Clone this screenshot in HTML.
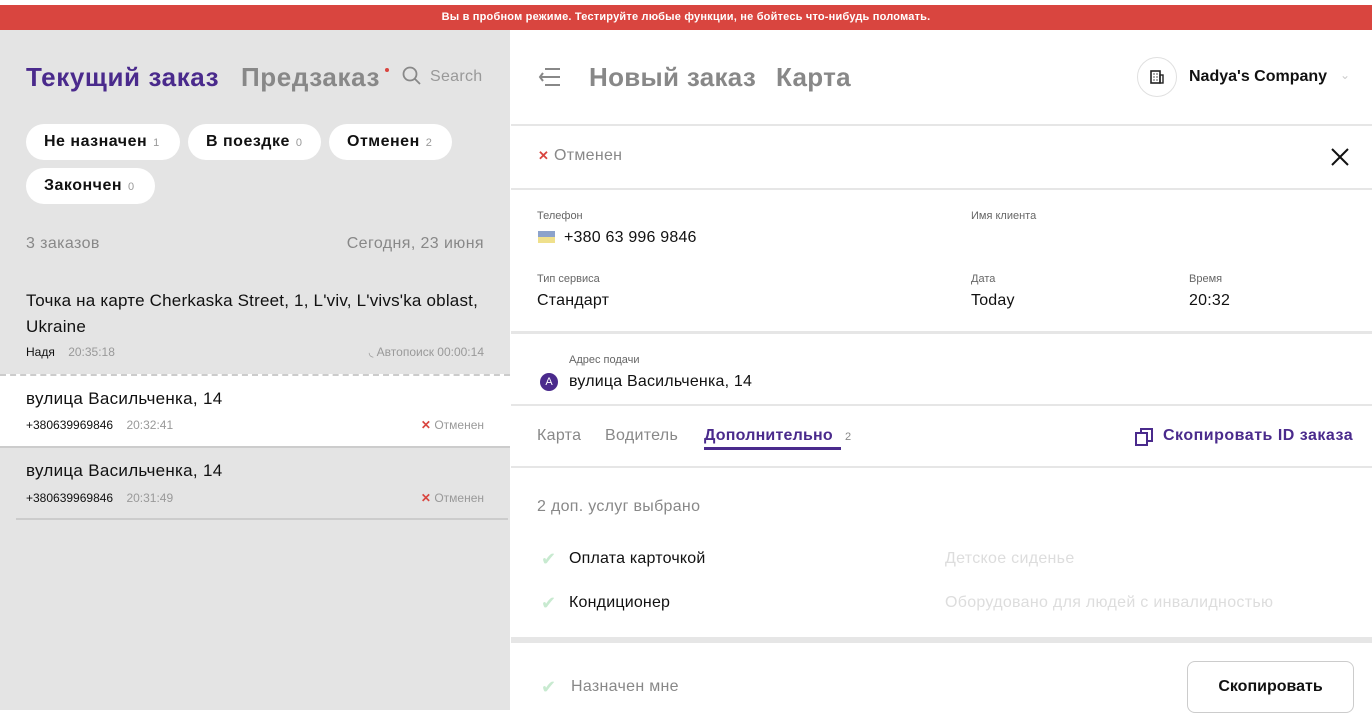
<!DOCTYPE html>
<html><head><meta charset="utf-8">
<style>
*{box-sizing:border-box;margin:0;padding:0}
body{width:1372px;height:710px;overflow:hidden;font-family:"Liberation Sans","Noto Sans CJK SC",sans-serif;background:#fff;position:relative;color:#111}
.a{position:absolute;white-space:nowrap}
.bar{position:absolute;left:0;top:5px;width:1372px;height:25px;background:#d9453f;color:#fff;font-size:11px;font-weight:bold;text-align:center;line-height:25px;letter-spacing:.2px}
.left{position:absolute;left:0;top:30px;width:510px;height:680px;background:#e4e4e4}
.pill{position:absolute;height:36px;background:#fff;border-radius:18px;font-size:16px;font-weight:bold;line-height:36px;padding-left:18px;letter-spacing:.5px}
.pill small{font-size:11px;color:#999;font-weight:normal;margin-left:6px}
.right{position:absolute;left:511px;top:30px;width:861px;height:680px;background:#fff}
.hl{position:absolute;left:511px;width:861px;height:2px;background:#e6e6e6}
.lbl{font-size:11px;color:#666}
.val{font-size:16px;color:#111;letter-spacing:.2px}
</style></head><body>
<div class="bar">Вы в пробном режиме. Тестируйте любые функции, не бойтесь что-нибудь поломать.</div>
<div class="left">
<div class="a" style="left:26px;top:32px;font-size:26px;font-weight:bold;color:#4a2a8c;letter-spacing:.6px">Текущий заказ</div>
<div class="a" style="left:241px;top:32px;font-size:26px;font-weight:bold;color:#888;letter-spacing:.6px">Предзаказ</div>
<div class="a" style="left:385px;top:38px;width:4px;height:4px;border-radius:2px;background:#d9453f"></div>
<svg class="a" style="left:402px;top:36px" width="20" height="20" viewBox="0 0 20 20"><circle cx="8" cy="8" r="6.5" fill="none" stroke="#888" stroke-width="1.8"/><path d="M13 13l5 5" stroke="#888" stroke-width="1.8"/></svg>
<div class="a" style="left:430px;top:38px;font-size:16px;color:#999;letter-spacing:.3px">Search</div>
<div class="pill" style="left:26px;top:94px;width:154px">Не назначен<small>1</small></div>
<div class="pill" style="left:188px;top:94px;width:133px">В поездке<small>0</small></div>
<div class="pill" style="left:329px;top:94px;width:123px">Отменен<small>2</small></div>
<div class="pill" style="left:26px;top:138px;width:129px">Закончен<small>0</small></div>
<div class="a" style="left:26px;top:205px;font-size:16px;color:#888;letter-spacing:.4px">3 заказов</div>
<div class="a" style="right:26px;top:205px;font-size:16px;color:#888;letter-spacing:.4px">Сегодня, 23 июня</div>
<div class="a" style="left:26px;top:258px;font-size:17px;line-height:26px;white-space:normal;width:480px;letter-spacing:.2px">Точка на карте Cherkaska Street, 1, L'viv, L'vivs'ka oblast, Ukraine</div>
<div class="a" style="left:26px;top:315px;font-size:12px">Надя <span style="color:#999;margin-left:10px">20:35:18</span></div>
<div class="a" style="right:26px;top:315px;font-size:12px;color:#999">◟ Автопоиск 00:00:14</div>
<div class="a" style="left:0;top:344px;width:510px;height:72px;background:#fff;border-top:2px dashed #ccc"></div>
<div class="a" style="left:26px;top:359px;font-size:17px;letter-spacing:.3px">вулица Васильченка, 14</div>
<div class="a" style="left:26px;top:388px;font-size:12px">+380639969846 <span style="color:#999;margin-left:10px">20:32:41</span></div>
<div class="a" style="right:26px;top:388px;font-size:12px;color:#999"><span style="color:#d9453f;font-weight:bold">✕</span> Отменен</div>
<div class="a" style="left:0;top:416px;width:510px;height:2px;background:#ccc"></div>
<div class="a" style="left:26px;top:431px;font-size:17px;letter-spacing:.3px">вулица Васильченка, 14</div>
<div class="a" style="left:26px;top:461px;font-size:12px">+380639969846 <span style="color:#999;margin-left:10px">20:31:49</span></div>
<div class="a" style="right:26px;top:461px;font-size:12px;color:#999"><span style="color:#d9453f;font-weight:bold">✕</span> Отменен</div>
<div class="a" style="left:16px;top:488px;width:492px;height:2px;background:#ccc"></div>
</div>
<div class="right"></div>
<svg class="a" style="left:538px;top:67px" width="24" height="20" viewBox="0 0 24 20"><path d="M7 2h15M2 10h20M7 18h15M5 6l-3 4 3 4" fill="none" stroke="#888" stroke-width="2"/></svg>
<div class="a" style="left:589px;top:62px;font-size:26px;font-weight:bold;color:#888;letter-spacing:.3px">Новый заказ</div>
<div class="a" style="left:776px;top:62px;font-size:26px;font-weight:bold;color:#888;letter-spacing:.3px">Карта</div>
<div class="a" style="left:1137px;top:57px;width:40px;height:40px;border:1px solid #e0e0e0;border-radius:20px"></div>
<svg class="a" style="left:1149px;top:69px" width="16" height="16" viewBox="0 0 16 16"><rect x="2" y="2" width="9" height="12" fill="none" stroke="#222" stroke-width="1.6"/><rect x="11" y="6" width="3" height="8" fill="none" stroke="#222" stroke-width="1.4"/><path d="M4.5 5h1M7.5 5h1M4.5 8h1M7.5 8h1M4.5 11h1M7.5 11h1" stroke="#222" stroke-width="1.4"/></svg>
<div class="a" style="left:1189px;top:68px;font-size:16px;font-weight:bold">Nadya's Company</div>
<div class="a" style="left:1340px;top:68px;font-size:12px;color:#ccc">⌄</div>
<div class="hl" style="top:124px"></div>
<div class="a" style="left:538px;top:147px;font-size:16px;color:#888;letter-spacing:.3px"><span style="color:#d9453f;font-size:13px;font-weight:bold">✕</span> Отменен</div>
<svg class="a" style="left:1330px;top:147px" width="20" height="20" viewBox="0 0 20 20"><path d="M2 2l16 16M18 2L2 18" stroke="#111" stroke-width="2"/></svg>
<div class="hl" style="top:188px"></div>
<div class="a lbl" style="left:537px;top:210px">Телефон</div>
<div class="a" style="left:538px;top:231px;width:17px;height:12px;background:linear-gradient(#5b7bb5 50%,#e8d35a 50%);opacity:.7"></div>
<div class="a val" style="left:564px;top:229px">+380 63 996 9846</div>
<div class="a lbl" style="left:971px;top:210px">Имя клиента</div>
<div class="a lbl" style="left:537px;top:273px">Тип сервиса</div>
<div class="a val" style="left:537px;top:292px">Стандарт</div>
<div class="a lbl" style="left:971px;top:273px">Дата</div>
<div class="a val" style="left:971px;top:292px">Today</div>
<div class="a lbl" style="left:1189px;top:273px">Время</div>
<div class="a val" style="left:1189px;top:292px">20:32</div>
<div class="hl" style="top:331px;height:3px"></div>
<div class="a lbl" style="left:569px;top:354px">Адрес подачи</div>
<div class="a" style="left:540px;top:373px;width:18px;height:18px;border-radius:9px;background:#4a2a8c;color:#fff;font-size:11px;text-align:center;line-height:18px">A</div>
<div class="a val" style="left:569px;top:373px">вулица Васильченка, 14</div>
<div class="hl" style="top:404px"></div>
<div class="a" style="left:537px;top:427px;font-size:16px;color:#888;letter-spacing:.3px">Карта</div>
<div class="a" style="left:605px;top:427px;font-size:16px;color:#888;letter-spacing:.3px">Водитель</div>
<div class="a" style="left:704px;top:427px;font-size:16px;font-weight:bold;color:#4a2a8c;letter-spacing:.2px">Дополнительно</div>
<div class="a" style="left:704px;top:447px;width:137px;height:3px;background:#4a2a8c"></div>
<div class="a" style="left:845px;top:431px;font-size:11px;color:#888">2</div>
<svg class="a" style="left:1134px;top:426px" width="22" height="22" viewBox="0 0 22 22"><rect x="2" y="7" width="11" height="12" fill="none" stroke="#4a2a8c" stroke-width="2"/><path d="M7 7V3h11v12h-5" fill="none" stroke="#4a2a8c" stroke-width="2"/></svg>
<div class="a" style="left:1163px;top:427px;font-size:16px;font-weight:bold;color:#4a2a8c;letter-spacing:.5px">Скопировать ID заказа</div>
<div class="hl" style="top:466px"></div>
<div class="a" style="left:537px;top:498px;font-size:16px;color:#888;letter-spacing:.3px">2 доп. услуг выбрано</div>
<div class="a" style="left:541px;top:549px;font-size:18px;color:#c8ead0">✔</div>
<div class="a val" style="left:569px;top:550px">Оплата карточкой</div>
<div class="a" style="left:945px;top:550px;font-size:16px;color:#ddd;letter-spacing:.3px">Детское сиденье</div>
<div class="a" style="left:541px;top:593px;font-size:18px;color:#c8ead0">✔</div>
<div class="a val" style="left:569px;top:594px">Кондиционер</div>
<div class="a" style="left:945px;top:594px;font-size:16px;color:#ddd;letter-spacing:.3px">Оборудовано для людей с инвалидностью</div>
<div class="hl" style="top:637px;height:6px"></div>
<div class="a" style="left:541px;top:677px;font-size:18px;color:#c8ead0">✔</div>
<div class="a" style="left:571px;top:678px;font-size:16px;color:#888;letter-spacing:.3px">Назначен мне</div>
<div class="a" style="left:1187px;top:661px;width:167px;height:52px;border:1px solid #ccc;border-radius:8px;font-size:16px;font-weight:bold;text-align:center;line-height:50px">Скопировать</div>
</body></html>
